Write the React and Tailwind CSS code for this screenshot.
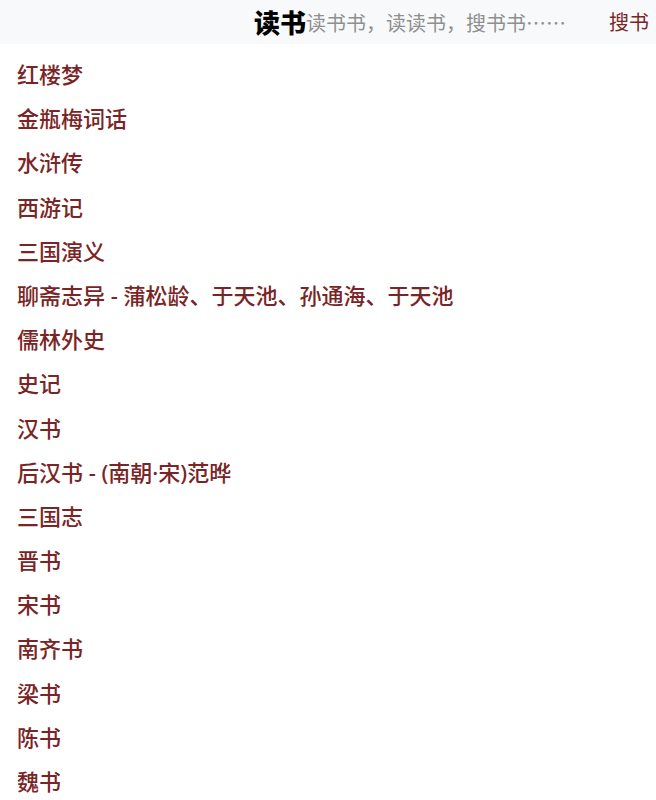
import React from 'react'

const books = [
  '红楼梦',
  '金瓶梅词话',
  '水浒传',
  '西游记',
  '三国演义',
  '聊斋志异 - 蒲松龄、于天池、孙通海、于天池',
  '儒林外史',
  '史记',
  '汉书',
  '后汉书 - (南朝·宋)范晔',
  '三国志',
  '晋书',
  '宋书',
  '南齐书',
  '梁书',
  '陈书',
  '魏书',
]

const listFont = { fontFamily: '"Noto Sans", "Noto Sans CJK SC", sans-serif' }
const headFont = { fontFamily: '"Noto Sans CJK SC", "Noto Sans", sans-serif' }

export default function App() {
  return (
    <div className="w-[656px] h-[800px] overflow-hidden bg-white">
      <header className="h-[44px] bg-[#f8f9fa] flex items-center justify-end" style={headFont}>
        <h1 className="text-[26px] font-black text-black leading-none">读书</h1>
        <input
          className="w-[296px] h-full bg-transparent outline-none text-[20px] text-[#333] placeholder:text-[#8f8f8f]"
          placeholder="读书书，读读书，搜书书……"
        />
        <button className="h-full px-[7px] text-[20px] text-[#7b2525]">搜书</button>
      </header>

      <ul className="pt-[8px] pl-[17px]" style={listFont}>
        {books.map(b => (
          <li key={b} className="h-[44.2px] leading-[44px] text-[22px] font-medium text-[#7a2525] whitespace-nowrap">
            <a href="#">{b}</a>
          </li>
        ))}
      </ul>
    </div>
  )
}
